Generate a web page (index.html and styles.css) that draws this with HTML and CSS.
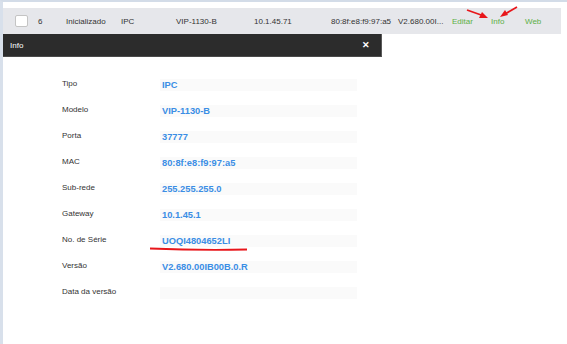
FILE: index.html
```html
<!DOCTYPE html>
<html lang="pt">
<head>
  <meta charset="UTF-8">
  <title>Info do dispositivo</title>
  <link rel="stylesheet" href="styles.css">
</head>
<body>

<div class="page">
  <!-- Device row -->
  <div class="deviceRow">
    <span class="cell chk"><span class="checkbox"></span></span>
    <span class="cell num">6</span>
    <span class="cell status">Inicializado</span>
    <span class="cell type">IPC</span>
    <span class="cell model">VIP-1130-B</span>
    <span class="cell ip">10.1.45.71</span>
    <span class="cell mac">80:8f:e8:f9:97:a5</span>
    <span class="cell ver">V2.680.00I...</span>
    <span class="cell action edit">Editar</span>
    <span class="cell action info">Info</span>
    <span class="cell action">Web</span>

    <svg class="arrows" width="70" height="20" viewBox="0 0 70 20">
      <line x1="2" y1="4" x2="19" y2="10" stroke="#e8161b" stroke-width="1.8"/>
      <polygon points="23,12 14,12 17,6" fill="#e8161b"/>
      <line x1="52" y1="1" x2="40" y2="8" stroke="#e8161b" stroke-width="1.8"/>
      <polygon points="35,11 40,4 43,9" fill="#e8161b"/>
    </svg>
  </div>

  <!-- Info modal -->
  <div class="modal">
    <div class="modalHeader">
      <span>Info</span>
      <span class="close">&#x2715;</span>
    </div>
    <div class="modalBody">
      <div class="infoRow"><span class="label">Tipo</span><span class="value">IPC</span></div>
      <div class="infoRow"><span class="label">Modelo</span><span class="value">VIP-1130-B</span></div>
      <div class="infoRow"><span class="label">Porta</span><span class="value">37777</span></div>
      <div class="infoRow"><span class="label">MAC</span><span class="value">80:8f:e8:f9:97:a5</span></div>
      <div class="infoRow"><span class="label">Sub-rede</span><span class="value">255.255.255.0</span></div>
      <div class="infoRow"><span class="label">Gateway</span><span class="value">10.1.45.1</span></div>
      <div class="infoRow">
        <span class="label">No. de Série</span>
        <span class="value marked">UOQI4804652LI
          <svg class="underline" width="100" height="5" viewBox="0 0 100 5">
            <path d="M1 1.5 Q 50 3.5 98 2.5" stroke="#e8161b" stroke-width="1.8" fill="none"/>
          </svg>
        </span>
      </div>
      <div class="infoRow"><span class="label">Versão</span><span class="value">V2.680.00IB00B.0.R</span></div>
      <div class="infoRow"><span class="label">Data da versão</span><span class="value"></span></div>
    </div>
  </div>
</div>

</body>
</html>
```

FILE: styles.css
```css
body {
  margin: 0;
  font-family: "Liberation Sans", Arial, sans-serif;
  background: #fff;
  color: #333;
}

.page {
  height: 342px;
  border-top: 2px solid #d3dce8;
  border-left: 3px solid #d8e0eb;
  padding-top: 6px;
  overflow: hidden;
}

.deviceRow {
  position: relative;
  display: flex;
  align-items: center;
  width: 546px;
  height: 26px;
  padding-left: 12px;
  background: #e6e7eb;
  font-size: 8px;
}

.cell { white-space: nowrap; }
.chk { width: 23px; display: flex; }
.checkbox {
  width: 11px;
  height: 10px;
  background: #fff;
  border: 1px solid #c4c4c4;
  border-radius: 2px;
}
.num { width: 28px; }
.status { width: 55px; }
.type { width: 55px; }
.model { width: 78px; }
.ip { width: 77px; }
.mac { width: 67px; }
.ver { width: 54px; }
.action { color: #5cb046; }
.edit { width: 39px; }
.info { width: 34px; }

.arrows {
  position: absolute;
  left: 462px;
  top: -2px;
}

.modal { width: 379px; }

.modalHeader {
  display: flex;
  justify-content: space-between;
  align-items: center;
  height: 22px;
  padding: 0 11px 0 7px;
  background: #2c2c2c;
  border-right: 1px solid #5a5a5a;
  border-bottom: 1px solid #4a4a4a;
  color: #fff;
  font-size: 8px;
}

.close { font-size: 9px; font-weight: bold; }

.modalBody { padding: 15px 0 0 59px; }

.infoRow {
  display: flex;
  align-items: center;
  height: 26px;
  font-size: 8px;
}

.label {
  width: 98px;
  color: #333;
  padding-bottom: 3px;
}

.value {
  position: relative;
  width: 195px;
  height: 12px;
  line-height: 12px;
  padding-left: 2px;
  background: #fafafa;
  color: #3b8ee5;
  font-size: 9.3px;
  font-weight: bold;
}

.underline {
  position: absolute;
  left: -11px;
  top: 12px;
}
```
